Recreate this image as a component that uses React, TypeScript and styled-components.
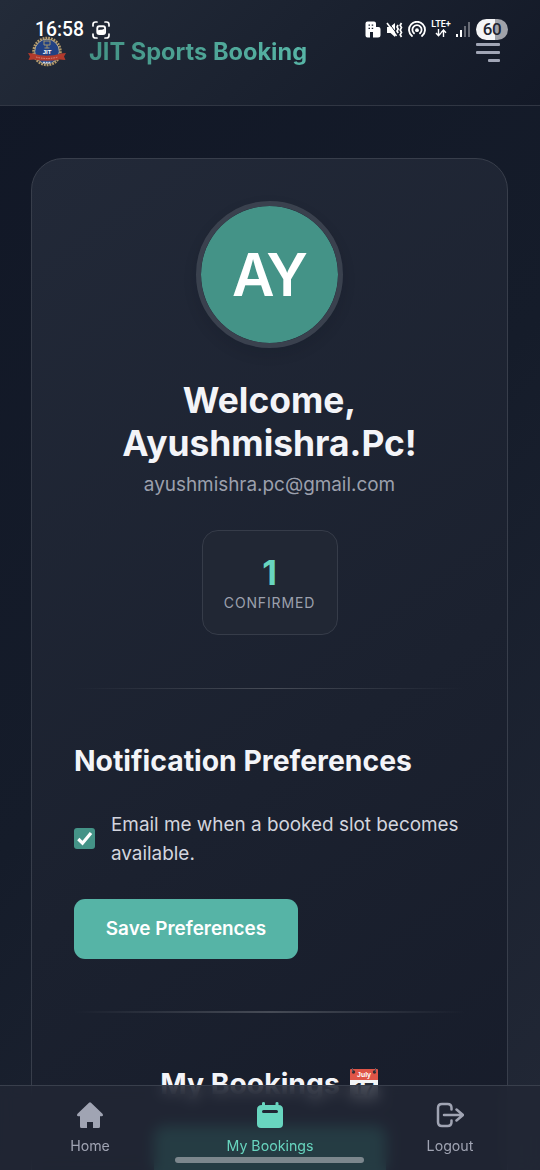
import React from "react";
import styled, { createGlobalStyle } from "styled-components";

const Global = createGlobalStyle`
  * { box-sizing: border-box; }
  body { margin: 0; background: #111827; }
  h1, h2, p { margin: 0; }
`;

const Screen = styled.div`
  position: relative;
  width: 540px;
  height: 1170px;
  overflow: hidden;
  background: linear-gradient(135deg, #111726 0%, #151c2a 50%, #222836 100%);
  font-family: Inter, "Liberation Sans", sans-serif;
  color: #f3f4f8;
`;

const StatusBar = styled.div`
  position: absolute;
  inset: 0 0 auto 0;
  height: 58px;
  padding: 1px 32px 0 35px;
  display: flex;
  align-items: center;
  justify-content: space-between;
  color: #fff;
  z-index: 4;
`;
const StatusGroup = styled.div<{ $gap: number }>`
  display: flex;
  align-items: center;
  gap: ${(p) => p.$gap}px;
`;
const Clock = styled.span`
  font: 500 19.3px/22px Roboto, sans-serif;
`;
const Network = styled.span`
  display: flex;
  flex-direction: column;
  align-items: center;
  width: 20px;
  margin-top: -2px;
  font: 600 9px/9px Roboto, sans-serif;
`;
const Battery = styled.span`
  width: 32px;
  height: 21px;
  margin-left: 1px;
  border-radius: 11px;
  display: grid;
  place-items: center;
  background: linear-gradient(90deg, #f4f5f7 60%, #a0a2a9 60%);
  color: #202532;
  font: 500 17px/21px Roboto, sans-serif;
  letter-spacing: -0.5px;
`;

const Header = styled.header`
  height: 106px;
  padding: 0 40px 0 28px;
  display: flex;
  align-items: center;
  border-bottom: 1px solid #303643;
  background: linear-gradient(135deg, #232b39 0%, #1b2230 50%, #131927 100%);
`;
const Brand = styled.div`
  flex: 1;
  display: flex;
  align-items: center;
  gap: 23px;
  margin-top: -2px;
`;
const BrandName = styled.span`
  font-size: 23.6px;
  line-height: 30px;
  font-weight: 700;
  background: linear-gradient(90deg, #449385, #57b5a6);
  background-clip: text;
  -webkit-background-clip: text;
  color: transparent;
`;
const MenuButton = styled.div`
  width: 24px;
  display: flex;
  flex-direction: column;
  align-items: flex-end;
  gap: 5px;
`;
const MenuLine = styled.i<{ $w: number }>`
  width: ${(p) => p.$w}px;
  height: 3px;
  border-radius: 1px;
  background: #a0a5b5;
`;

const Card = styled.main`
  width: 477px;
  height: 1240px;
  margin: 52px 0 0 31px;
  padding: 42px;
  border: 1px solid #383e4b;
  border-radius: 32px;
  background: linear-gradient(145deg, #222938 0%, #1b212f 50%, #151a28 100%);
  display: flex;
  flex-direction: column;
  align-items: center;
`;
const Avatar = styled.div`
  width: 147px;
  height: 147px;
  flex: none;
  padding: 2px 3px 0 0;
  border-radius: 50%;
  border: 5px solid #3a414e;
  background: #449387;
  background-clip: padding-box;
  box-shadow: 0 6px 14px rgba(10, 15, 26, 0.12);
  display: grid;
  place-items: center;
  color: #fff;
  font-size: 58.5px;
  font-weight: 600;
  line-height: 1;
  letter-spacing: -4px;
`;
const Welcome = styled.h1`
  margin-top: 32px;
  text-align: center;
  font-size: 35.4px;
  line-height: 42.5px;
  font-weight: 700;
`;
const Email = styled.p`
  margin-top: 5px;
  font-size: 18.9px;
  line-height: 29px;
  color: #9ca0ad;
`;
const Stat = styled.div`
  width: 136px;
  height: 105px;
  flex: none;
  margin-top: 31px;
  padding-top: 21px;
  border: 1px solid #363c49;
  border-radius: 16px;
  background: #212734;
  text-align: center;
`;
const StatValue = styled.div`
  font-size: 34px;
  line-height: 42px;
  font-weight: 700;
  color: #68d5bf;
`;
const StatLabel = styled.div`
  font-size: 14px;
  line-height: 18px;
  letter-spacing: 0.85px;
  color: #9ca0ad;
`;
const Divider = styled.hr<{ $thick?: boolean }>`
  width: 391px;
  height: ${(p) => (p.$thick ? 2 : 1)}px;
  flex: none;
  margin: ${(p) => (p.$thick ? 52 : 53)}px 0 0;
  border: 0;
  background: linear-gradient(90deg, transparent, #464b56, transparent);
`;
const Section = styled.section<{ $top: number }>`
  width: 100%;
  margin-top: ${(p) => p.$top}px;
`;
const SectionTitle = styled.h2<{ $center?: boolean }>`
  display: flex;
  align-items: center;
  justify-content: ${(p) => (p.$center ? "center" : "flex-start")};
  gap: 9px;
  font-size: 28.35px;
  line-height: 36px;
  font-weight: 700;
  white-space: nowrap;
`;
const Preference = styled.label`
  margin-top: 32px;
  display: flex;
  align-items: center;
  gap: 16px;
  font-size: 18.9px;
  line-height: 28.5px;
  color: #d3d5de;
`;
const Checkbox = styled.span`
  width: 21px;
  height: 21px;
  flex: none;
  margin-top: -2px;
  border-radius: 3px;
  background: #449387;
  display: grid;
`;
const SaveButton = styled.button`
  display: block;
  width: 224px;
  height: 60px;
  margin-top: 31px;
  padding: 0;
  border: 0;
  border-radius: 11px;
  background: #56b4a6;
  color: #fff;
  font: 600 18.9px/24px Inter, sans-serif;
`;
const BookingPanel = styled.div`
  width: 232px;
  height: 110px;
  margin: 24px auto 0;
  border-radius: 10px;
  background: #348f7f;
`;

const Nav = styled.nav`
  position: absolute;
  inset: auto 0 0 0;
  height: 85px;
  padding-top: 15px;
  display: grid;
  grid-template-columns: repeat(3, 1fr);
  border-top: 1px solid #393f4c;
  background: rgba(34, 39, 53, 0.8);
  backdrop-filter: blur(7px);
  z-index: 3;
`;
const NavItem = styled.div<{ $active?: boolean }>`
  display: flex;
  flex-direction: column;
  align-items: center;
  gap: 6px;
  font-size: 14.2px;
  line-height: 22px;
  color: ${(p) => (p.$active ? "#68d5bf" : "#a0a4b3")};
`;
const HomeIndicator = styled.div`
  position: absolute;
  left: 175px;
  bottom: 7px;
  width: 189px;
  height: 6px;
  border-radius: 3px;
  background: #7c878d;
  z-index: 5;
`;

const CaptureIcon = () => (
  <svg width="18" height="18" viewBox="0 0 18 18" fill="none" stroke="currentColor" strokeWidth="1.7" strokeLinecap="round">
    <path d="M1 5V3.5Q1 1 3.5 1H5M13 1h1.500Q17 1 17 3.500V5M17 13v1.500Q17 17 14.500 17H13M5 17H3.500Q1 17 1 14.500V13" />
    <rect x="5.300" y="5.300" width="7.800" height="7.800" rx="2" strokeWidth="1.900" />
    <path d="M5.500 9.500q2-1 3.500-.700t3.500-1.300V13h-7z" fill="currentColor" stroke="none" />
  </svg>
);
const BuildingIcon = () => (
  <svg width="16" height="17" viewBox="0 0 16 17">
    <path fill="currentColor" fillRule="evenodd" d="M2.500 0.500H9Q11 .5 11 2.500V6h2.500Q15.500 6 15.500 8v6q0 2.500-2.500 2.500H8V11H5v5.500H2.500Q.5 16.500.5 14.500V2.500Q.5.500 2.500.5ZM3.500 3.500v1.200h1.500V3.500ZM6.700 3.500v1.200h1.500V3.500ZM3.500 6.700v1.200h1.500v-1.200ZM6.700 6.700v1.200h1.500v-1.200Z" />
  </svg>
);
const MuteIcon = () => (
  <svg width="17" height="16" viewBox="0 0 17 16" fill="none" stroke="currentColor">
    <path d="M1 5h3l5-4v14L4.500 11H1z" fill="currentColor" stroke="none" />
    <path d="M2.500 .5l8.500 11.500" stroke="#1b2230" strokeWidth="1" />
    <path d="M1 1l9.500 13" strokeWidth="1.600" />
    <path d="M12 3l-1 2 1.200 2-1.200 2 1.200 2M15.500 1l-1.300 2.300 1.300 2.300-1.300 2.400 1.300 2.400-1.300 2.300 1.300 2.300" strokeWidth="1.700" />
  </svg>
);
const HotspotIcon = () => (
  <svg width="18" height="17" viewBox="0 0 18 17" fill="none" stroke="currentColor" strokeWidth="1.800" strokeLinecap="round">
    <path d="M4 15A8 8 0 1 1 14 15" />
    <path d="M6 12.300A4.600 4.600 0 1 1 12 12.300" />
    <circle cx="9" cy="9.200" r="1.900" fill="currentColor" stroke="none" />
  </svg>
);
const DataArrows = () => (
  <svg width="12" height="8" viewBox="0 0 12 8" fill="none" stroke="currentColor" strokeWidth="1.400">
    <path d="M3.500 0v6.500M1 4l2.500 2.800L6 4M8.500 8V1.200M6 3.800L8.500 1 11 3.800" />
  </svg>
);
const SignalIcon = () => (
  <svg width="14" height="15" viewBox="0 0 14 15" fill="#fff">
    <rect x="0" y="12" width="2" height="3" />
    <rect x="4" y="8" width="2" height="7" />
    <rect x="8" y="4" width="2" height="11" opacity=".35" />
    <rect x="12" y="0" width="2" height="15" opacity=".35" />
  </svg>
);

const LogoText = styled.text`
  font: 700 6px "Liberation Sans", sans-serif;
  text-anchor: middle;
  fill: #fff;
`;
const Logo = () => (
  <svg width="38" height="32" viewBox="0 0 38 32">
    <circle cx="19" cy="15.500" r="13.500" fill="none" stroke="#b79c6b" strokeWidth="2.500" strokeDasharray="1.800 1" />
    <circle cx="19" cy="15.500" r="12.300" fill="#224183" stroke="#d2bf93" strokeWidth=".8" />
    <path d="M16 5h6v4h-6zM19 9v3M16.500 12h5" fill="none" stroke="#a1956d" strokeWidth="1" />
    <LogoText x="19" y="18">JIT</LogoText>
    <path d="M12 23h14l-3 4h-8z" fill="#24488c" />
    <path d="M0 17l5 .500Q19 22 33 17.500L38 17l-2 3.500 1.500 3.500-6-.5Q19 26 6.500 23.500L.5 24 2 20.500z" fill="#b23a2c" />
    <path d="M8 21Q19 24 30 21" fill="none" stroke="#dc8f82" strokeWidth="1" strokeDasharray="1.500 1" />
    <path d="M15 26.500h8" stroke="#ccd3e5" strokeWidth="1.300" strokeDasharray="2 .700" />
  </svg>
);

const EmojiText = styled.text`
  font-family: "Liberation Sans", sans-serif;
  font-weight: 700;
  text-anchor: middle;
`;
const CalendarEmoji = () => (
  <svg width="30" height="32" viewBox="0 0 30 32">
    <path d="M1 10h28v19q0 2-2 2H3q-2 0-2-2z" fill="#f4f5f6" />
    <path d="M1 2q0-1 1-1h26q1 0 1 1v10H1z" fill="#df5547" />
    <circle cx="4.500" cy="4" r="1.700" fill="#392d34" />
    <circle cx="25.500" cy="4" r="1.700" fill="#392d34" />
    <path d="M3.500 0v4M26.500 0v4" stroke="#555461" />
    <EmojiText x="15" y="9" fontSize="7" fill="#fff">July</EmojiText>
    <EmojiText x="15" y="28" fontSize="18" fill="#252a34">17</EmojiText>
  </svg>
);

const HomeIcon = () => (
  <svg width="28" height="28" viewBox="0 0 28 28" fill="currentColor">
    <path d="M13 1.700q1-1 2 0L26.500 12.800q1.300 2-.8 2.500H24v10.200q0 1.500-1.500 1.500H17v-6h-6v6H5.500Q4 27 4 25.500V15.300H2.300Q.2 14.800 1.500 12.800z" />
  </svg>
);
const CalendarIcon = () => (
  <svg width="28" height="28" viewBox="0 0 28 28">
    <path fill="currentColor" fillRule="evenodd" d="M6 2.300Q6 1 7.500 1T9 2.300V4H19.500V2.300q0-1.300 1.500-1.300t1.500 1.300V4q4.500 .2 4.500 4.500V23q0 4-4 4H5q-4 0-4-4V8.500Q1 4.200 6 4zM7.500 9a1.500 1.500 0 0 0 0 3h13a1.500 1.500 0 0 0 0-3z" />
  </svg>
);
const LogoutIcon = () => (
  <svg width="28" height="28" viewBox="0 0 28 28" fill="none" stroke="currentColor" strokeWidth="2.500" strokeLinecap="round" strokeLinejoin="round">
    <path d="M15.500 8.500V7q0-4-4-4H6Q2 3 2 7v14q0 4 4 4h5.500q4 0 4-4v-1.500M8 14h19M20.500 8.500L27 14l-6.500 5.500" />
  </svg>
);

export default function App() {
  return (
    <Screen>
      <Global />
      <StatusBar>
        <StatusGroup $gap={8}>
          <Clock>16:58</Clock>
          <CaptureIcon />
        </StatusGroup>
        <StatusGroup $gap={5}>
          <BuildingIcon />
          <MuteIcon />
          <HotspotIcon />
          <Network>
            LTE+
            <DataArrows />
          </Network>
          <SignalIcon />
          <Battery>60</Battery>
        </StatusGroup>
      </StatusBar>
      <Header>
        <Brand>
          <Logo />
          <BrandName>JIT Sports Booking</BrandName>
        </Brand>
        <MenuButton>
          <MenuLine $w={24} />
          <MenuLine $w={24} />
          <MenuLine $w={12} />
        </MenuButton>
      </Header>
      <Card>
        <Avatar>AY</Avatar>
        <Welcome>
          Welcome,
          <br />
          Ayushmishra.Pc!
        </Welcome>
        <Email>ayushmishra.pc@gmail.com</Email>
        <Stat>
          <StatValue>1</StatValue>
          <StatLabel>CONFIRMED</StatLabel>
        </Stat>
        <Divider />
        <Section $top={54}>
          <SectionTitle>Notification Preferences</SectionTitle>
          <Preference>
            <Checkbox>
              <svg width="21" height="21" viewBox="0 0 21 21" fill="none" stroke="#fff" strokeWidth="3.200">
                <path d="M4.300 11l4.200 4.200L17 5" />
              </svg>
            </Checkbox>
            <span>Email me when a booked slot becomes available.</span>
          </Preference>
          <SaveButton>Save Preferences</SaveButton>
        </Section>
        <Divider $thick />
        <Section $top={53}>
          <SectionTitle $center>
            My Bookings <CalendarEmoji />
          </SectionTitle>
          <BookingPanel />
        </Section>
      </Card>
      <Nav>
        <NavItem>
          <HomeIcon />
          Home
        </NavItem>
        <NavItem $active>
          <CalendarIcon />
          My Bookings
        </NavItem>
        <NavItem>
          <LogoutIcon />
          Logout
        </NavItem>
      </Nav>
      <HomeIndicator />
    </Screen>
  );
}
